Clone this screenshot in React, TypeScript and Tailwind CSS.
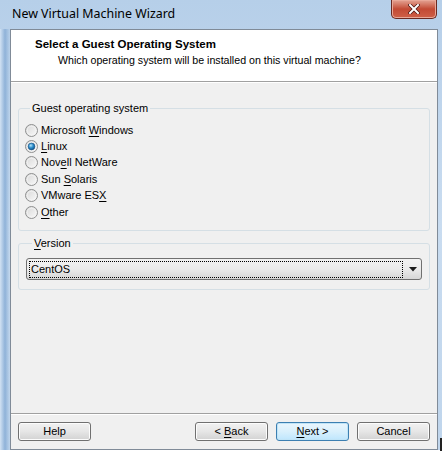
import type { ReactNode } from 'react';

const ui = { fontFamily: '"Liberation Sans", Arial, sans-serif' };
const caption = { fontFamily: '"Noto Sans", "Open Sans", sans-serif' };

type Option = { label: ReactNode; checked?: boolean };

const u = (c: string) => <span className="underline underline-offset-[2px]">{c}</span>;

const options: Option[] = [
  { label: <>Microsoft {u('W')}indows</> },
  { label: <>{u('L')}inux</>, checked: true },
  { label: <>Nov{u('e')}ll NetWare</> },
  { label: <>Sun {u('S')}olaris</> },
  { label: <>VMware ES{u('X')}</> },
  { label: <>{u('O')}ther</> },
];

function Radio({ checked }: { checked?: boolean }) {
  return (
    <svg width="13" height="13" viewBox="0 0 13 13" className="shrink-0">
      <defs>
        <linearGradient id="rface" x1="0" y1="0" x2="1" y2="1">
          <stop offset="0" stopColor="#d6d6d6" />
          <stop offset="1" stopColor="#fbfbfb" />
        </linearGradient>
        <radialGradient id="rdot" cx="0.4" cy="0.35" r="0.7">
          <stop offset="0" stopColor="#b5e3f8" />
          <stop offset="0.5" stopColor="#2a8ccb" />
          <stop offset="1" stopColor="#0f4f86" />
        </radialGradient>
      </defs>
      <circle cx="6.5" cy="6.5" r="6" fill="url(#rface)" stroke="#8e8f8f" />
      <circle cx="6.5" cy="6.5" r="4.3" fill="none" stroke="#f4f4f4" strokeWidth="0.8" />
      {checked && <circle cx="6.5" cy="6.5" r="3.4" fill="url(#rdot)" stroke="#1c5180" strokeWidth="0.6" />}
    </svg>
  );
}

function Button({ children, primary }: { children: ReactNode; primary?: boolean }) {
  return (
    <button
      className={
        'w-[73px] h-[19px] rounded-[3px] border text-[11px] text-black leading-none ' +
        (primary
          ? 'border-[#3c7fb1] bg-gradient-to-b from-[#eaf6fd] via-[#d9f0fc] to-[#bee6fd] shadow-[inset_0_0_0_1px_#c0e4f7]'
          : 'border-[#707070] bg-gradient-to-b from-[#f2f2f2] via-[#e6e6e6] to-[#d2d2d2] shadow-[inset_0_0_0_1px_#fcfcfc]')
      }
    >
      {children}
    </button>
  );
}

export default function App() {
  return (
    <div className="relative w-[446px] h-[460px] bg-white" style={ui}>
      <div className="w-[442px] h-[450px] flex flex-col bg-gradient-to-b from-[#b6cfe9] via-[#c9dcf0] to-[#bfd5ec]">
        {/* title bar */}
        <div className="h-[29px] flex items-start justify-between pl-[12px] pr-[5px]">
          <span className="mt-[5px] text-[12.4px] text-black" style={caption}>
            New Virtual Machine Wizard
          </span>
          <div className="w-[46px] h-[19px] rounded-b-[5px] border border-t-0 border-[#6b2a22] bg-gradient-to-b from-[#e3a394] via-[#c24a34] to-[#cf6048] flex items-center justify-center shadow-[inset_0_0_0_1px_#e9a898]">
            <svg width="12" height="10" viewBox="0 0 12 10">
              <path d="M2 1 L10 9 M10 1 L2 9" stroke="#4a1410" strokeWidth="3.4" strokeLinecap="square" />
              <path d="M2 1 L10 9 M10 1 L2 9" stroke="#ffffff" strokeWidth="2" strokeLinecap="square" />
            </svg>
          </div>
        </div>

        <div className="flex-1 flex pl-[10px] bg-gradient-to-r from-[#d2e2f3] via-[#8fb2d8] to-transparent bg-[length:10px_100%] bg-no-repeat">
          <div className="w-[428px] h-full border border-[#808b98] bg-[#f0f0f0] flex flex-col">
            {/* header */}
            <div className="h-[52px] bg-white border-b border-[#a0a0a0] pt-[8px] pl-[24px]">
              <div className="text-[11.5px] font-bold leading-[13px] text-black">
                Select a Guest Operating System
              </div>
              <div className="text-[10.65px] leading-[13px] text-black mt-[3px] pl-[23px]">
                Which operating system will be installed on this virtual machine?
              </div>
            </div>
            <div className="h-px bg-white" />

            <div className="flex-1 flex flex-col px-[7px] pt-[19px]">
              <fieldset className="border border-[#d5dfe5] rounded-[3px] h-[129px] pl-[6px] pt-[7px]">
                <legend className="ml-[5px] px-[2px] text-[11px] leading-[13px] text-black">
                  Guest operating system
                </legend>
                <div className="flex flex-col">
                  {options.map((o, i) => (
                    <label key={i} className="h-[16.4px] flex items-center gap-[3px] text-[11px] text-black">
                      <Radio checked={o.checked} />
                      <span className="leading-[13px]">{o.label}</span>
                    </label>
                  ))}
                </div>
              </fieldset>

              <fieldset className="mt-[6px] border border-[#d5dfe5] rounded-[3px] h-[53px] px-[7px] pt-[8px]">
                <legend className="ml-[6px] px-[2px] text-[11px] leading-[13px] text-black">
                  {u('V')}ersion
                </legend>
                <div className="h-[22px] rounded-[3px] border border-[#707070] bg-gradient-to-b from-[#f2f2f2] via-[#ebebeb] to-[#d6d6d6] flex items-center pl-[2px] pr-[4px]">
                  <div className="flex-1 h-[17px] border border-dotted border-black flex items-center pl-[1px] text-[11px] text-black">
                    CentOS
                  </div>
                  <svg width="8" height="5" viewBox="0 0 8 5" className="ml-[6px]">
                    <path d="M0 0 H8 L4 4.5 Z" fill="#1a1a1a" />
                  </svg>
                </div>
              </fieldset>

              <div className="flex-1" />
            </div>

            {/* footer */}
            <div className="h-px bg-[#a0a0a0]" />
            <div className="h-px bg-white" />
            <div className="h-[34px] flex items-start pt-[7px] pl-[7px] pr-[7px]">
              <Button>Help</Button>
              <div className="flex-1" />
              <div className="flex gap-[8px]">
                <Button>&lt; {u('B')}ack</Button>
                <Button primary>{u('N')}ext &gt;</Button>
                <Button>Cancel</Button>
              </div>
            </div>
          </div>
        </div>
      </div>
      <div className="absolute left-[440px] top-[438px] w-[2px] h-[13px] bg-[#222]" />
    </div>
  );
}
